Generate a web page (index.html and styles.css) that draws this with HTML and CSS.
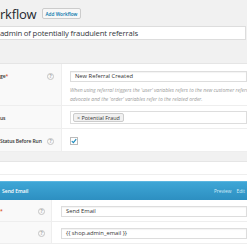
FILE: index.html
```html
<!DOCTYPE html>
<html>
<head>
<meta name="viewport" content="width=device-width, initial-scale=1">
<title>Edit Workflow</title>
<link rel="stylesheet" href="styles.css">
</head>
<body>
<div class="wrap">
  <div class="page-head">
    <h1 class="page-title">rkflow</h1>
    <a href="#" class="add-btn">Add Workflow</a>
  </div>

  <div class="title-box">admin of potentially fraudulent referrals</div>

  <div class="metabox">
    <div class="row row-trigger">
      <div class="label">ge<span class="req">*</span><span class="help">?</span></div>
      <div class="field">
        <div class="input">New Referral Created</div>
        <p class="desc">When using referral triggers the 'user' variables refers to the new customer referred<br>advocate and the 'order' variables refer to the related order.</p>
      </div>
    </div>
    <div class="row row-short">
      <div class="label">us</div>
      <div class="field">
        <div class="select"><span class="tag"><span class="x">×</span> Potential Fraud</span></div>
      </div>
    </div>
    <div class="row row-short">
      <div class="label">Status Before Run<span class="help">?</span></div>
      <div class="field">
        <span class="check">
          <svg width="6" height="6" viewBox="0 0 6 6"><path d="M0.8 3.1 L2.4 4.6 L5.2 1.2" fill="none" stroke="#1e8cbe" stroke-width="1.2"/></svg>
        </span>
      </div>
    </div>
  </div>

  <div class="actions-box">
    <div class="actions-top"></div>
    <div class="action">
      <div class="action-head">
        <span class="action-title">Send Email</span>
        <span class="action-links"><a href="#">Preview</a><a href="#">Edit</a></span>
      </div>
      <div class="arow">
        <div class="alabel"><span class="req">*</span><span class="help">?</span></div>
        <div class="afield"><div class="input">Send Email</div></div>
      </div>
      <div class="arow">
        <div class="alabel"><span class="help">?</span></div>
        <div class="afield"><div class="input">{{ shop.admin_email }}</div></div>
      </div>
      <div class="arow"></div>
    </div>
  </div>
</div>
</body>
</html>
```

FILE: styles.css
```css
* {
  box-sizing: border-box;
}

html,
body {
  overflow: hidden;
}

body {
  margin: 0;
  background: #f1f1f1;
  font-family: "Open Sans", "Liberation Sans", sans-serif;
  color: #444;
}

.wrap {
  width: 247px;
  height: 247px;
  overflow: hidden;
}

.page-head {
  display: flex;
  align-items: center;
  height: 26px;
  padding-top: 1px;
}

.page-title {
  margin: 0;
  font-size: 13px;
  font-weight: 400;
  color: #23282d;
  letter-spacing: -0.2px;
}

.add-btn {
  margin-left: 5px;
  padding: 0 3px;
  height: 11px;
  line-height: 10px;
  font-size: 4.7px;
  font-weight: 600;
  color: #0073aa;
  text-decoration: none;
  background: #f7f7f7;
  border: 1px solid #ccc;
  border-radius: 2px;
}

.title-box {
  width: 246px;
  height: 14px;
  line-height: 12px;
  font-size: 7.7px;
  letter-spacing: -0.15px;
  color: #32373c;
  background: #fff;
  border: 1px solid #ddd;
  border-left: 0;
}

.metabox {
  margin-top: 23px;
  background: #fff;
  border-top: 1px solid #e5e5e5;
}

.row {
  display: flex;
  border-bottom: 1px solid #eee;
}

.row-trigger {
  height: 42px;
}

.row-short {
  height: 23px;
}

.label {
  position: relative;
  width: 62px;
  flex: none;
  background: #f9f9f9;
  border-right: 1px solid #eee;
  font-size: 5px;
  font-weight: 600;
  letter-spacing: -0.1px;
  color: #333;
  padding-top: 9px;
}

.req {
  color: #d54e21;
}

.help {
  position: absolute;
  right: 7px;
  top: 9px;
  width: 7px;
  height: 7px;
  border: 1px solid #c4c4c4;
  border-radius: 50%;
  font-size: 4.5px;
  line-height: 5px;
  text-align: center;
  color: #aaa;
  font-weight: 700;
  letter-spacing: 0;
}

.field {
  flex: 1;
  min-width: 0;
  overflow: hidden;
  padding: 7px 0 0 8px;
}

.row-short .field {
  display: flex;
  align-items: flex-start;
  padding-top: 5px;
}

.input {
  height: 11px;
  line-height: 9px;
  padding-left: 4px;
  font-size: 5.8px;
  color: #333;
  background: #fff;
  border: 1px solid #ddd;
  box-shadow: inset 0 1px 1px rgba(0, 0, 0, 0.05);
  white-space: nowrap;
}

.desc {
  margin: 4px 0 0 0;
  font-size: 5px;
  line-height: 9px;
  font-style: italic;
  color: #999;
  white-space: nowrap;
}

.select {
  display: flex;
  align-items: center;
  width: 100%;
  height: 13px;
  padding-left: 2px;
  background: #fff;
  border: 1px solid #ddd;
}

.tag {
  display: flex;
  align-items: center;
  height: 9px;
  padding: 0 3px;
  font-size: 5.4px;
  color: #333;
  background: #f1f1f1;
  border: 1px solid #ccc;
  border-radius: 2px;
  white-space: pre;
}

.tag .x {
  color: #666;
}

.check {
  display: flex;
  align-items: center;
  justify-content: center;
  margin-top: 3px;
  width: 8px;
  height: 8px;
  border: 1px solid #bbb;
  background: #fff;
}

.actions-box {
  margin-top: 9px;
  background: #fff;
  border-top: 1px solid #e5e5e5;
}

.actions-top {
  height: 13px;
  border-bottom: 1px solid #eee;
}

.action {
  margin-top: 6px;
}

.action-head {
  display: flex;
  justify-content: space-between;
  align-items: center;
  height: 19px;
  padding: 0 2px;
  background: linear-gradient(#3ea6d6, #2d8fc1);
  border-top: 1px solid #5cb6e0;
  color: #fff;
}

.action-title {
  font-size: 5px;
  font-weight: 600;
}

.action-links {
  font-size: 4.8px;
}

.action-links a {
  color: #d4ecf8;
  text-decoration: none;
  margin-left: 5px;
}

.arow {
  display: flex;
  height: 22px;
  border-bottom: 1px solid #eee;
}

.alabel {
  position: relative;
  width: 52px;
  flex: none;
  background: #f9f9f9;
  border-right: 1px solid #eee;
  font-size: 5px;
  font-weight: 600;
  padding-top: 8px;
}

.alabel .help {
  right: 6px;
  top: 8px;
}

.afield {
  flex: 1;
  padding: 6px 0 0 9px;
}
```
